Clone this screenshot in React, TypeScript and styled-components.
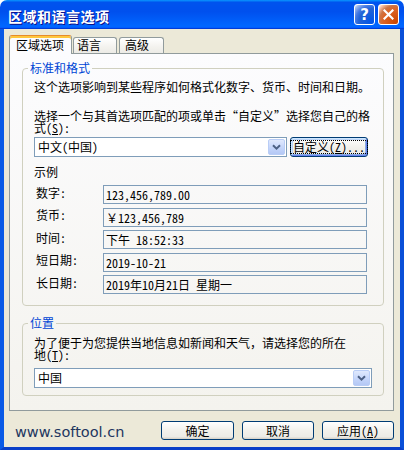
import React from "react";
import styled, { createGlobalStyle } from "styled-components";

const UI_FONT = `"Noto Sans Mono CJK SC", "Noto Sans CJK SC", "DejaVu Sans", sans-serif`;

const GlobalStyle = createGlobalStyle`
  html, body {
    margin: 0;
    padding: 0;
    background: #ffffff;
  }
  body {
    font-family: ${UI_FONT};
    font-size: 12px;
  }
`;

// 창 전체
const Window = styled.div`
  width: 404px;
  height: 450px;
  display: flex;
  flex-direction: column;
  border-radius: 7px 7px 0 0;
  overflow: hidden;
  font-family: ${UI_FONT};
  font-size: 12px;
  color: #000;
`;

// 제목 표시줄
const TitleBar = styled.div`
  height: 29px;
  flex-shrink: 0;
  display: flex;
  align-items: center;
  padding: 0 5px 0 8px;
  box-sizing: border-box;
  background: linear-gradient(
    180deg,
    #0997ff,
    #0053ee 8%,
    #0050ee 40%,
    #0066ff 88%,
    #0066ff 93%,
    #005bff 95%,
    #003dd7 96%,
    #003dd7
  );
`;

const Title = styled.div`
  flex: 1;
  padding-top: 2px;
  font-family: "Noto Sans CJK SC", sans-serif;
  font-weight: 700;
  font-size: 14px;
  letter-spacing: 0.5px;
  color: #ffffff;
  text-shadow: 1px 1px #0f1089;
`;

const CaptionButton = styled.div<{ $kind: "help" | "close" }>`
  width: 21px;
  height: 21px;
  box-sizing: border-box;
  margin-left: ${(p) => (p.$kind === "close" ? "3px" : "0")};
  border: 1px solid #ffffff;
  border-radius: 3px;
  display: flex;
  align-items: center;
  justify-content: center;
  color: #ffffff;
  font-family: "DejaVu Sans", sans-serif;
  font-weight: 700;
  font-size: 15px;
  background: ${(p) =>
    p.$kind === "close"
      ? "radial-gradient(circle at 90% 90%, #cc4600 0%, #dc6527 55%, #cd7546 70%, #ffccb2 90%, #ffffff 100%)"
      : "radial-gradient(circle at 90% 90%, #0054e9 0%, #2263d5 55%, #4479e4 70%, #a3bbec 90%, #ffffff 100%)"};
`;

// 본문 (파란 테두리 포함)
const Frame = styled.div`
  flex: 1;
  display: flex;
  flex-direction: column;
  background: #ece9d8;
  padding: 6px 6px 0 5px;
  border-left: 4px solid #0a5ae6;
  border-right: 4px solid #0a50d8;
  border-bottom: 3px solid #0a3fc8;
`;

const TabStrip = styled.div`
  height: 19px;
  display: flex;
  align-items: flex-end;
  position: relative;
  z-index: 1;
  margin-bottom: -1px;
`;

const Tab = styled.div<{ $active?: boolean; $w: number; $pl: number; $ml?: number }>`
  width: ${(p) => p.$w}px;
  margin-left: ${(p) => p.$ml ?? 0}px;
  box-sizing: border-box;
  padding-left: ${(p) => p.$pl}px;
  border: 1px solid #919b9c;
  border-bottom: none;
  border-radius: 3px 3px 0 0;
  line-height: 14px;
  white-space: nowrap;
  ${(p) =>
    p.$active
      ? `
    height: 19px;
    padding-top: 2px;
    border-top-color: #e68b2c;
    background: #fcfcfe;
    box-shadow: inset 0 2px #ffc73c;
  `
      : `
    height: 16px;
    margin-bottom: 1px;
    background: linear-gradient(180deg, #ffffff, #f3f2ee 60%, #ecebe6);
  `}
`;

const Panel = styled.div`
  height: 358px;
  box-sizing: border-box;
  border: 1px solid #919b9c;
  background: linear-gradient(180deg, #fcfcfe, #f4f3ee);
  padding: 7px 9px 0 12px;
  display: flex;
  flex-direction: column;
  gap: 10px;
`;

const Group = styled.fieldset`
  margin: 0;
  padding: 0;
  min-width: 0;
  border: 1px solid #d0d0bf;
  border-radius: 4px;
`;

const Legend = styled.legend`
  margin-left: 5px;
  padding: 0 2px;
  line-height: 14px;
  color: #0046d5;
`;

const GroupBody = styled.div<{ $pt: number; $pb: number }>`
  padding: ${(p) => p.$pt}px 0 ${(p) => p.$pb}px 11px;
  display: flex;
  flex-direction: column;
  align-items: flex-start;
`;

const Line = styled.div<{ $mt?: number; $lh: number }>`
  margin-top: ${(p) => p.$mt ?? 0}px;
  line-height: ${(p) => p.$lh}px;
  white-space: nowrap;
`;

const Row = styled.div<{ $mt: number }>`
  margin-top: ${(p) => p.$mt}px;
  display: flex;
  gap: 3px;
`;

const Combo = styled.div<{ $w: number }>`
  width: ${(p) => p.$w}px;
  height: 20px;
  box-sizing: border-box;
  border: 1px solid #7f9db9;
  background: #ffffff;
  display: flex;
  align-items: center;
  padding: 1px;
`;

const ComboText = styled.div`
  flex: 1;
  padding-left: 2px;
  line-height: 16px;
`;

const DropButton = styled.div`
  width: 17px;
  height: 16px;
  box-sizing: border-box;
  border: 1px solid #b9cdf6;
  border-radius: 2px;
  background: linear-gradient(180deg, #e0e9fd, #c3d4fa 60%, #b4c8f5);
  display: flex;
  align-items: center;
  justify-content: center;
`;

const PushButton = styled.div<{ $w: number; $focused?: boolean }>`
  width: ${(p) => p.$w}px;
  height: ${(p) => (p.$focused ? 20 : 19)}px;
  box-sizing: border-box;
  border: 1px solid #003c74;
  border-radius: 3px;
  background: linear-gradient(180deg, #ffffff, #f2f1ec 50%, #ecebe6 86%, #d6d0c5);
  display: flex;
  align-items: center;
  justify-content: center;
  line-height: 14px;
  white-space: nowrap;
  ${(p) =>
    p.$focused
      ? `box-shadow: inset 1px 1px #cee7ff, inset -1px -1px #6982ee, inset 2px 2px #bcd4f6, inset -2px -2px #89ade4;`
      : ""}
`;

const FocusRing = styled.span`
  border: 1px dotted #000;
  padding: 0 2px;
  line-height: 12px;
`;

const SampleList = styled.div`
  margin-top: 6px;
  display: flex;
  flex-direction: column;
  gap: 3.5px;
`;

const SampleRow = styled.div`
  display: flex;
  align-items: center;
  height: 19px;
`;

const SampleLabel = styled.div`
  width: 69px;
  box-sizing: border-box;
  padding-left: 2px;
  margin-top: -4px;
  line-height: 14px;
`;

const SampleBox = styled.div`
  width: 264px;
  height: 19px;
  box-sizing: border-box;
  border: 1px solid #7f9db9;
  padding-left: 2px;
  line-height: 17px;
  white-space: pre;
`;

const Footer = styled.div`
  flex: 1;
  display: flex;
  align-items: flex-start;
  padding-top: 10px;
`;

const SiteLink = styled.div`
  margin-left: 6px;
  padding-top: 2px;
  font-family: "DejaVu Sans", Verdana, sans-serif;
  font-size: 14.5px;
  line-height: 19px;
  color: #22365f;
`;

const ButtonGroup = styled.div`
  margin-left: auto;
  display: flex;
  gap: 8px;
`;

const Chevron = () => (
  <svg width="9" height="6" viewBox="0 0 9 6">
    <path d="M1 1.2 L4.5 4.6 L8 1.2" fill="none" stroke="#4d6185" strokeWidth="2" />
  </svg>
);

const CloseX = () => (
  <svg width="11" height="11" viewBox="0 0 11 11">
    <path d="M1.5 1.5 L9.5 9.5 M9.5 1.5 L1.5 9.5" stroke="#ffffff" strokeWidth="2.2" strokeLinecap="square" />
  </svg>
);

const samples = [
  { label: "数字:", value: "123,456,789.00" },
  { label: "货币:", value: "￥123,456,789" },
  { label: "时间:", value: "下午 18:52:33" },
  { label: "短日期:", value: "2019-10-21" },
  { label: "长日期:", value: "2019年10月21日 星期一" },
];

export default function App() {
  return (
    <>
      <GlobalStyle />
      <Window lang="zh-CN">
        <TitleBar>
          <Title>区域和语言选项</Title>
          <CaptionButton $kind="help">?</CaptionButton>
          <CaptionButton $kind="close">
            <CloseX />
          </CaptionButton>
        </TitleBar>
        <Frame>
          <TabStrip>
            <Tab $active $w={63} $pl={6}>
              区域选项
            </Tab>
            <Tab $w={44} $pl={3} $ml={1}>
              语言
            </Tab>
            <Tab $w={45} $pl={5} $ml={2}>
              高级
            </Tab>
          </TabStrip>
          <Panel>
            <Group>
              <Legend>标准和格式</Legend>
              <GroupBody $pt={5} $pb={11}>
                <Line $lh={14}>这个选项影响到某些程序如何格式化数字、货币、时间和日期。</Line>
                <Line $mt={16} $lh={12}>
                  选择一个与其首选项匹配的项或单击“自定义”选择您自己的格
                  <br />
                  式(<u>S</u>):
                </Line>
                <Row $mt={3}>
                  <Combo $w={253}>
                    <ComboText>中文(中国)</ComboText>
                    <DropButton>
                      <Chevron />
                    </DropButton>
                  </Combo>
                  <PushButton $w={78} $focused>
                    <FocusRing>
                      自定义(<u>Z</u>)...
                    </FocusRing>
                  </PushButton>
                </Row>
                <Line $mt={8} $lh={14}>
                  示例
                </Line>
                <SampleList>
                  {samples.map((s) => (
                    <SampleRow key={s.label}>
                      <SampleLabel>{s.label}</SampleLabel>
                      <SampleBox>{s.value}</SampleBox>
                    </SampleRow>
                  ))}
                </SampleList>
              </GroupBody>
            </Group>
            <Group>
              <Legend>位置</Legend>
              <GroupBody $pt={7} $pb={7}>
                <Line $lh={12}>
                  为了便于为您提供当地信息如新闻和天气，请选择您的所在
                  <br />
                  地(<u>T</u>):
                </Line>
                <Row $mt={7}>
                  <Combo $w={338}>
                    <ComboText>中国</ComboText>
                    <DropButton>
                      <Chevron />
                    </DropButton>
                  </Combo>
                </Row>
              </GroupBody>
            </Group>
          </Panel>
          <Footer>
            <SiteLink>www.softool.cn</SiteLink>
            <ButtonGroup>
              <PushButton $w={73}>确定</PushButton>
              <PushButton $w={72}>取消</PushButton>
              <PushButton $w={72}>
                应用(<u>A</u>)
              </PushButton>
            </ButtonGroup>
          </Footer>
        </Frame>
      </Window>
    </>
  );
}
